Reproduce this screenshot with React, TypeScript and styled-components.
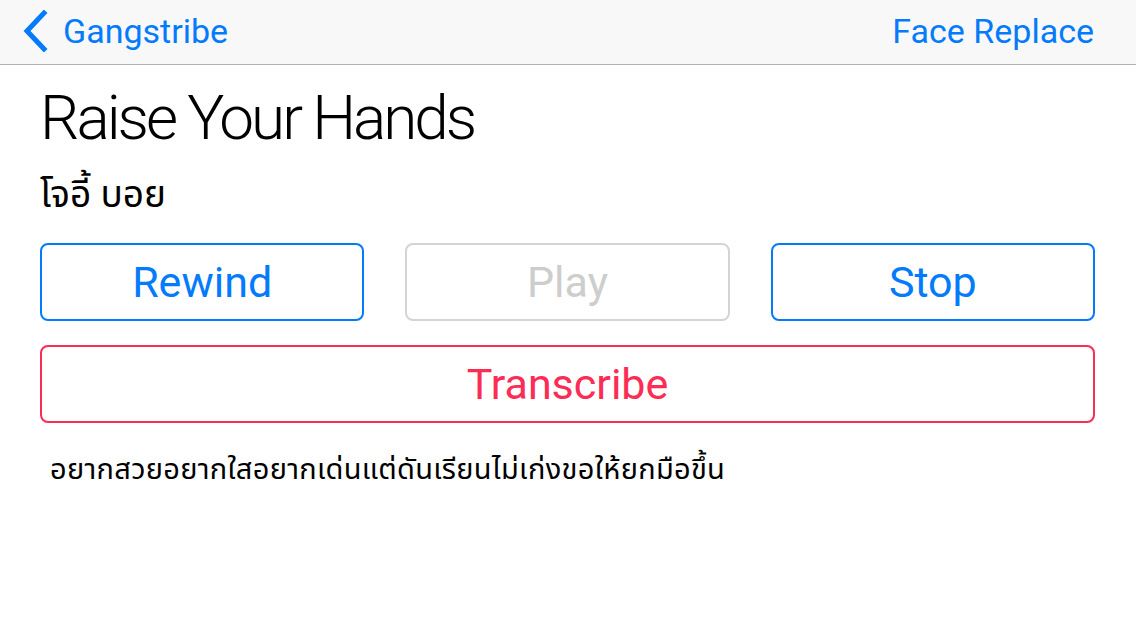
import styled, { createGlobalStyle } from "styled-components";

const GlobalStyle = createGlobalStyle`
  html, body {
    margin: 0;
    padding: 0;
    background: #ffffff;
    font-family: Roboto, "Noto Sans", "Noto Sans Thai", "DejaVu Sans", sans-serif;
  }
`;

const BLUE = "#047bfb";
const RED = "#fb2c55";

export default function App() {
  return (
    <>
      <GlobalStyle />
      <Screen>
        <NavBar>
          <BackLink>
            <svg width="28" height="42" viewBox="0 0 28 42">
              <path
                d="M23 3 L6 21 L23 39"
                fill="none"
                stroke={BLUE}
                strokeWidth="5"
                strokeLinecap="square"
              />
            </svg>
            <NavText>Gangstribe</NavText>
          </BackLink>
          <NavText>Face Replace</NavText>
        </NavBar>
        <Content>
          <Title>Raise Your Hands</Title>
          <Artist>โจอี้ บอย</Artist>
          <ButtonRow>
            <ActionButton $tone="blue">Rewind</ActionButton>
            <ActionButton $tone="gray">Play</ActionButton>
            <ActionButton $tone="blue">Stop</ActionButton>
          </ButtonRow>
          <ActionButton $tone="red">Transcribe</ActionButton>
          <Lyrics>อยากสวยอยากใสอยากเด่นแต่ดันเรียนไม่เก่งขอให้ยกมือขึ้น</Lyrics>
        </Content>
      </Screen>
    </>
  );
}

const Screen = styled.div`
  width: 1136px;
  height: 640px;
  background: #ffffff;
  overflow: hidden;
`;

const NavBar = styled.div`
  height: 65px;
  box-sizing: border-box;
  background: #f8f8f8;
  border-bottom: 1px solid #b2b2b2;
  display: flex;
  align-items: center;
  justify-content: space-between;
  padding: 0 42px 2px 21px;
`;

const BackLink = styled.div`
  display: flex;
  align-items: center;
  gap: 14px;
`;

const NavText = styled.span`
  color: ${BLUE};
  font-size: 34px;
  font-weight: 400;
  line-height: 40px;
`;

const Content = styled.div`
  padding: 16px 41px 0 40px;
  display: flex;
  flex-direction: column;
`;

const Title = styled.h1`
  margin: 0;
  font-size: 62px;
  font-weight: 300;
  line-height: 74px;
  color: #000;
  letter-spacing: -3px;
`;

const Artist = styled.div`
  margin-top: 16px;
  font-size: 37px;
  line-height: 48px;
  color: #000;
`;

const ButtonRow = styled.div`
  display: grid;
  grid-template-columns: 1fr 1fr 1fr;
  gap: 41px;
  margin: 24px 0 24px;
`;

const tones = {
  blue: { fg: BLUE, border: BLUE },
  gray: { fg: "#cdcdcd", border: "#d4d4d4" },
  red: { fg: RED, border: RED },
};

const ActionButton = styled.button<{ $tone: keyof typeof tones }>`
  height: 78px;
  box-sizing: border-box;
  background: #fff;
  border: 2px solid ${(p) => tones[p.$tone].border};
  border-radius: 8px;
  color: ${(p) => tones[p.$tone].fg};
  font-family: inherit;
  font-size: 43px;
  font-weight: 400;
  padding: 0;
`;

const Lyrics = styled.p`
  margin: 28px 0 0 10px;
  font-size: 29px;
  line-height: 36px;
  letter-spacing: 0.3px;
  color: #000;
`;
